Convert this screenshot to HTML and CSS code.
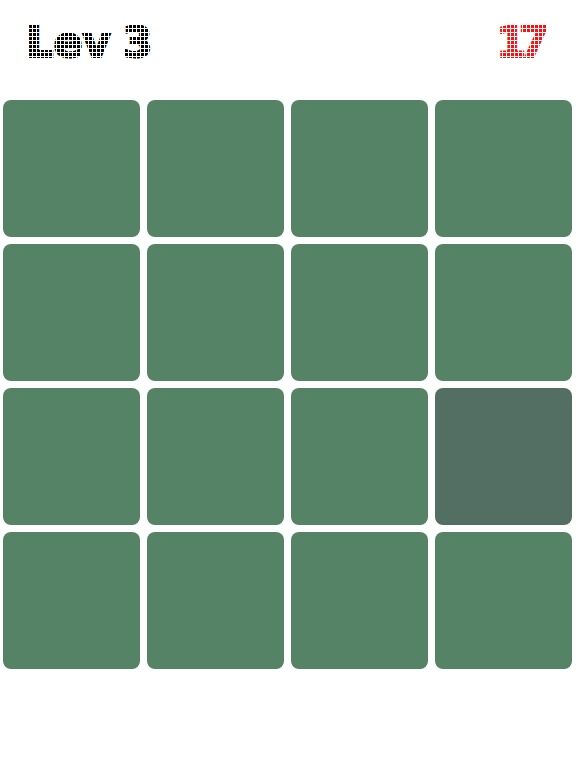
FILE: index.html
```html
<!DOCTYPE html>
<html>
<head>
<meta charset="utf-8">
<link rel="stylesheet" href="styles.css">
</head>
<body>
<div class="app">
  <header class="bar">
    <span class="dots level">Lev 3</span>
    <span class="dots score">17</span>
  </header>
  <main class="board">
    <div class="tile"></div><div class="tile"></div><div class="tile"></div><div class="tile"></div>
    <div class="tile"></div><div class="tile"></div><div class="tile"></div><div class="tile"></div>
    <div class="tile"></div><div class="tile"></div><div class="tile"></div><div class="tile odd"></div>
    <div class="tile"></div><div class="tile"></div><div class="tile"></div><div class="tile"></div>
  </main>
</div>
</body>
</html>
```
FILE: styles.css
```css
html, body {
  margin: 0;
  padding: 0;
  background: #ffffff;
}
.app {
  width: 576px;
  height: 768px;
}
.bar {
  height: 100px;
  box-sizing: border-box;
  padding: 20px 30px 0 26px;
  display: flex;
  justify-content: space-between;
  align-items: flex-start;
}
.dots {
  position: relative;
  font-family: "DejaVu Sans", sans-serif;
  font-weight: bold;
  font-size: 43px;
  line-height: 44px;
  -webkit-text-stroke: 2px currentColor;
}
.dots::after {
  content: "";
  position: absolute;
  left: -6px;
  right: -6px;
  top: 0;
  bottom: 0;
  pointer-events: none;
  background-image:
    linear-gradient(90deg, #fff 1px, transparent 1px),
    linear-gradient(#fff 1px, transparent 1px);
  background-size: 4px 4px;
}
.level {
  color: #000;
  letter-spacing: 0;
  word-spacing: -3px;
}
.score {
  color: #ff1010;
  letter-spacing: -7px;
  padding-right: 4px;
}
.board {
  padding: 0 0 0 3px;
  display: grid;
  grid-template-columns: repeat(4, 137px);
  grid-auto-rows: 137px;
  gap: 7px;
}
.tile {
  background: #558365;
  border-radius: 8px;
}
.tile.odd {
  background: #536f63;
}
```
